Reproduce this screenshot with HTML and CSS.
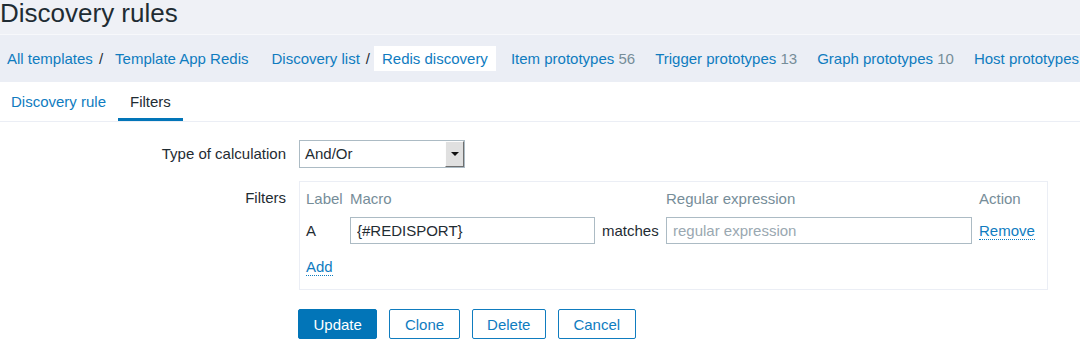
FILE: index.html
```html
<!DOCTYPE html>
<html lang="en">
<head>
    <meta charset="UTF-8">
    <meta name="viewport" content="width=device-width, initial-scale=1.0">
    <title>Discovery rules</title>
    <link rel="stylesheet" href="styles.css">
</head>
<body>
    <header class="page-title">
        <h1>Discovery rules</h1>
    </header>

    <nav class="breadcrumbs">
        <ul class="crumbs">
            <li><a href="#">All templates</a></li>
            <li class="sep">/</li>
            <li><a href="#">Template App Redis</a></li>
        </ul>
        <ul class="crumbs">
            <li><a href="#">Discovery list</a></li>
            <li class="sep">/</li>
            <li class="selected"><a href="#">Redis discovery</a></li>
        </ul>
        <ul class="links">
            <li><a href="#">Item prototypes</a> <span class="count">56</span></li>
            <li><a href="#">Trigger prototypes</a> <span class="count">13</span></li>
            <li><a href="#">Graph prototypes</a> <span class="count">10</span></li>
            <li><a href="#">Host prototypes</a></li>
        </ul>
    </nav>

    <ul class="tabs">
        <li><a href="#">Discovery rule</a></li>
        <li class="active"><a href="#">Filters</a></li>
    </ul>

    <form class="form" id="filterForm">
        <div class="form-row">
            <label class="form-label">Type of calculation</label>
            <div class="form-field">
                <div class="combobox">
                    <span class="combo-value">And/Or</span>
                    <span class="combo-btn"><span class="combo-arrow"></span></span>
                </div>
            </div>
        </div>

        <div class="form-row">
            <label class="form-label filters-label">Filters</label>
            <div class="form-field">
                <div class="filter-box">
                    <div class="filter-grid">
                        <div class="col-head">Label</div>
                        <div class="col-head">Macro</div>
                        <div class="col-head"></div>
                        <div class="col-head">Regular expression</div>
                        <div class="col-head">Action</div>

                        <div>A</div>
                        <input type="text" class="text-input" value="{#REDISPORT}">
                        <div>matches</div>
                        <input type="text" class="text-input" placeholder="regular expression">
                        <div><a href="#" class="link-action">Remove</a></div>

                        <div class="add-row"><a href="#" class="link-action">Add</a></div>
                    </div>
                </div>
            </div>
        </div>

        <div class="form-actions">
            <button type="submit" class="btn btn-primary">Update</button>
            <button type="button" class="btn">Clone</button>
            <button type="button" class="btn">Delete</button>
            <button type="button" class="btn">Cancel</button>
        </div>
    </form>
</body>
</html>
```

FILE: styles.css
```css
body {
    margin: 0;
    font-family: 'Liberation Sans', Arial, sans-serif;
    font-size: 15px;
    color: #1f2c33;
    background-color: white;
    overflow: hidden;
}

a {
    color: #0f7cbf;
    text-decoration: none;
}

.page-title {
    height: 34px;
    background-color: #eff1f6;
    border-bottom: 1px solid #f7f8fb;
}

.page-title h1 {
    margin: 0;
    font-size: 26px;
    font-weight: normal;
    line-height: 26px;
    color: #1f2c33;
}

.breadcrumbs {
    display: flex;
    align-items: center;
    height: 47px;
    padding-left: 7px;
    background-color: #ebeef5;
    white-space: nowrap;
    overflow: hidden;
}

.crumbs,
.links {
    display: flex;
    align-items: center;
    list-style: none;
    margin: 0;
    padding: 0;
}

.crumbs {
    margin-right: 15px;
}

.crumbs li:last-child {
    padding: 0 8px;
    line-height: 25px;
}

.crumbs li.selected {
    background-color: white;
}

.sep {
    margin: 0 4px 0 6px;
    color: #1f2c33;
}

.links li {
    margin-right: 20px;
}

.count {
    color: #768d99;
}

.tabs {
    display: flex;
    list-style: none;
    margin: 0 0 0 -1px;
    padding: 0;
    border-bottom: 1px solid #ebeef5;
}

.tabs a {
    display: block;
    padding: 4px 12px 0;
    line-height: 32px;
    border-bottom: 3px solid transparent;
}

.tabs .active a {
    color: #1f2c33;
    border-bottom-color: #0275b8;
}

.form {
    padding-top: 18px;
}

.form-row {
    display: grid;
    grid-template-columns: 286px auto;
    column-gap: 13px;
    margin-bottom: 13px;
}

.form-label {
    text-align: right;
    line-height: 28px;
}

.filters-label {
    padding-top: 3px;
}

.combobox {
    display: flex;
    width: 166px;
    height: 28px;
    box-sizing: border-box;
    border: 1px solid #acbbc4;
    background-color: white;
}

.combo-value {
    flex: 1;
    padding-left: 5px;
    line-height: 26px;
}

.combo-btn {
    display: flex;
    align-items: center;
    justify-content: center;
    width: 19px;
    box-sizing: border-box;
    background-color: #e0e0e0;
    border: 1px solid;
    border-color: #fdfdfd #6f6f6f #6f6f6f #fdfdfd;
}

.combo-arrow {
    width: 0;
    height: 0;
    border-left: 4px solid transparent;
    border-right: 4px solid transparent;
    border-top: 4px solid #111;
}

.filter-box {
    width: 749px;
    box-sizing: border-box;
    border: 1px solid #ebeef5;
    padding: 5px 12px 12px 6px;
}

.filter-grid {
    display: grid;
    grid-template-columns: 37px 245px 57px 306px auto;
    column-gap: 7px;
    row-gap: 6px;
    align-items: center;
}

.col-head {
    color: #768d99;
    line-height: 24px;
}

.text-input {
    height: 27px;
    box-sizing: border-box;
    border: 1px solid #acbbc4;
    padding: 0 6px;
    font-family: inherit;
    font-size: 15px;
    color: #1f2c33;
    width: 100%;
}

.text-input::placeholder {
    color: #9aa8b1;
}

.link-action {
    border-bottom: 1px dotted #0f7cbf;
}

.add-row {
    grid-column: 1 / -1;
    margin-top: 7px;
    line-height: 20px;
}

.form-actions {
    display: flex;
    gap: 12px;
    padding: 6px 0 0 298px;
}

.btn {
    height: 30px;
    padding: 0 14.5px;
    font-family: inherit;
    font-size: 15px;
    color: #0f7cbf;
    background-color: white;
    border: 1px solid #0f7cbf;
    border-radius: 2px;
    cursor: pointer;
}

.btn-primary {
    color: white;
    background-color: #0275b8;
    border-color: #0275b8;
}
```
